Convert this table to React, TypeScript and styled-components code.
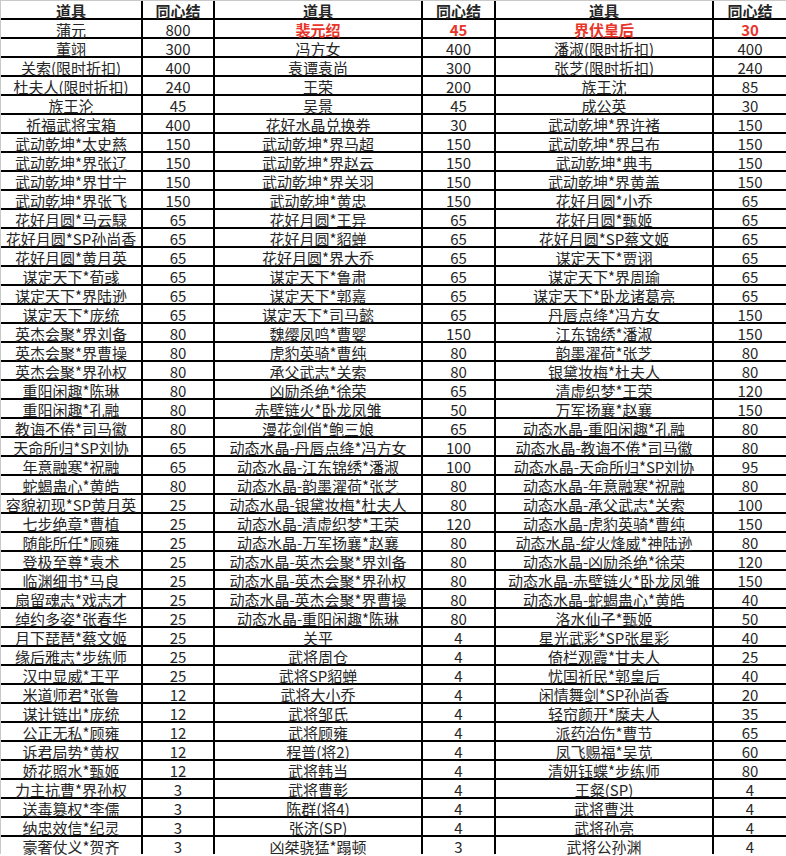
import React from "react";
import styled, { createGlobalStyle } from "styled-components";

type Item = [string, number];

// 三组道具 / 同心结
const groupA: Item[] = [
  ["蒲元", 800],
  ["董翊", 300],
  ["关索(限时折扣)", 400],
  ["杜夫人(限时折扣)", 240],
  ["族王沦", 45],
  ["祈福武将宝箱", 400],
  ["武动乾坤*太史慈", 150],
  ["武动乾坤*界张辽", 150],
  ["武动乾坤*界甘宁", 150],
  ["武动乾坤*界张飞", 150],
  ["花好月圆*马云騄", 65],
  ["花好月圆*SP孙尚香", 65],
  ["花好月圆*黄月英", 65],
  ["谋定天下*荀彧", 65],
  ["谋定天下*界陆逊", 65],
  ["谋定天下*庞统", 65],
  ["英杰会聚*界刘备", 80],
  ["英杰会聚*界曹操", 80],
  ["英杰会聚*界孙权", 80],
  ["重阳闲趣*陈琳", 80],
  ["重阳闲趣*孔融", 80],
  ["教诲不倦*司马徽", 80],
  ["天命所归*SP刘协", 65],
  ["年意融寒*祝融", 65],
  ["蛇蝎蛊心*黄皓", 80],
  ["容貌初现*SP黄月英", 25],
  ["七步绝章*曹植", 25],
  ["随能所任*顾雍", 25],
  ["登极至尊*袁术", 25],
  ["临渊细书*马良", 25],
  ["扇留魂志*戏志才", 25],
  ["绰约多姿*张春华", 25],
  ["月下琵琶*蔡文姬", 25],
  ["缘后雅志*步练师", 25],
  ["汉中显威*王平", 25],
  ["米道师君*张鲁", 12],
  ["谋计链出*庞统", 12],
  ["公正无私*顾雍", 12],
  ["诉君局势*黄权", 12],
  ["娇花照水*甄姬", 12],
  ["力主抗曹*界孙权", 3],
  ["送毒篡权*李儒", 3],
  ["纳忠效信*纪灵", 3],
  ["豪奢仗义*贺齐", 3],
];

const groupB: Item[] = [
  ["裴元绍", 45],
  ["冯方女", 400],
  ["袁谭袁尚", 300],
  ["王荣", 200],
  ["吴景", 45],
  ["花好水晶兑换券", 30],
  ["武动乾坤*界马超", 150],
  ["武动乾坤*界赵云", 150],
  ["武动乾坤*界关羽", 150],
  ["武动乾坤*黄忠", 150],
  ["花好月圆*王异", 65],
  ["花好月圆*貂蝉", 65],
  ["花好月圆*界大乔", 65],
  ["谋定天下*鲁肃", 65],
  ["谋定天下*郭嘉", 65],
  ["谋定天下*司马懿", 65],
  ["魏缨凤鸣*曹婴", 150],
  ["虎豹英骑*曹纯", 80],
  ["承父武志*关索", 80],
  ["凶励杀绝*徐荣", 65],
  ["赤壁链火*卧龙凤雏", 50],
  ["漫花剑俏*鲍三娘", 65],
  ["动态水晶-丹唇点绛*冯方女", 100],
  ["动态水晶-江东锦绣*潘淑", 100],
  ["动态水晶-韵墨濯荷*张芝", 80],
  ["动态水晶-银黛妆梅*杜夫人", 80],
  ["动态水晶-清虚织梦*王荣", 120],
  ["动态水晶-万军扬襄*赵襄", 80],
  ["动态水晶-英杰会聚*界刘备", 80],
  ["动态水晶-英杰会聚*界孙权", 80],
  ["动态水晶-英杰会聚*界曹操", 80],
  ["动态水晶-重阳闲趣*陈琳", 80],
  ["关平", 4],
  ["武将周仓", 4],
  ["武将SP貂蝉", 4],
  ["武将大小乔", 4],
  ["武将邹氏", 4],
  ["武将顾雍", 4],
  ["程普(将2)", 4],
  ["武将韩当", 4],
  ["武将曹彰", 4],
  ["陈群(将4)", 4],
  ["张济(SP)", 4],
  ["凶桀骁猛*蹋顿", 3],
];

const groupC: Item[] = [
  ["界伏皇后", 30],
  ["潘淑(限时折扣)", 400],
  ["张芝(限时折扣)", 240],
  ["族王沈", 85],
  ["成公英", 30],
  ["武动乾坤*界许褚", 150],
  ["武动乾坤*界吕布", 150],
  ["武动乾坤*典韦", 150],
  ["武动乾坤*界黄盖", 150],
  ["花好月圆*小乔", 65],
  ["花好月圆*甄姬", 65],
  ["花好月圆*SP蔡文姬", 65],
  ["谋定天下*贾诩", 65],
  ["谋定天下*界周瑜", 65],
  ["谋定天下*卧龙诸葛亮", 65],
  ["丹唇点绛*冯方女", 150],
  ["江东锦绣*潘淑", 150],
  ["韵墨濯荷*张芝", 80],
  ["银黛妆梅*杜夫人", 80],
  ["清虚织梦*王荣", 120],
  ["万军扬襄*赵襄", 150],
  ["动态水晶-重阳闲趣*孔融", 80],
  ["动态水晶-教诲不倦*司马徽", 80],
  ["动态水晶-天命所归*SP刘协", 95],
  ["动态水晶-年意融寒*祝融", 80],
  ["动态水晶-承父武志*关索", 100],
  ["动态水晶-虎豹英骑*曹纯", 150],
  ["动态水晶-绽火烽威*神陆逊", 80],
  ["动态水晶-凶励杀绝*徐荣", 120],
  ["动态水晶-赤壁链火*卧龙凤雏", 150],
  ["动态水晶-蛇蝎蛊心*黄皓", 40],
  ["洛水仙子*甄姬", 50],
  ["星光武彩*SP张星彩", 40],
  ["倚栏观霞*甘夫人", 25],
  ["忧国祈民*郭皇后", 40],
  ["闲情舞剑*SP孙尚香", 20],
  ["轻帘颜开*糜夫人", 35],
  ["派药治伤*曹节", 65],
  ["凤飞赐福*吴苋", 60],
  ["清妍钰蝶*步练师", 80],
  ["王粲(SP)", 4],
  ["武将曹洪", 4],
  ["武将孙亮", 4],
  ["武将公孙渊", 4],
];

// 第一行（裴元绍 / 界伏皇后）为红色加粗
const redRows: Record<string, boolean> = { 裴元绍: true, 界伏皇后: true };

const App: React.FC = () => {
  const headers = ["道具", "同心结", "道具", "同心结", "道具", "同心结"];

  return (
    <>
      <GlobalStyle />
      <Page>
        <Sheet>
          {headers.map((h, i) => (
            <HeadCell key={`h${i}`}>{h}</HeadCell>
          ))}
          {groupA.map((row, i) =>
            [row, groupB[i], groupC[i]].map(([name, count], g) => {
              const red = !!redRows[name];
              return (
                <React.Fragment key={`${i}-${g}`}>
                  <Cell $red={red}>{name}</Cell>
                  <Cell $red={red}>{count}</Cell>
                </React.Fragment>
              );
            })
          )}
        </Sheet>
      </Page>
    </>
  );
};

export default App;

/** Styled Components */
const GlobalStyle = createGlobalStyle`
  html, body {
    margin: 0;
    padding: 0;
    background: #ffffff;
  }
  body {
    font-family: "Noto Sans CJK SC", "Noto Sans", sans-serif;
  }
`;

const Page = styled.div`
  width: 786px;
  height: 856px;
  overflow: hidden;
  background: #ffffff;
`;

const Sheet = styled.div`
  display: grid;
  grid-template-columns: 140px 70px 206px 71px 216px 72px;
  grid-auto-rows: 17px;
  gap: 2px;
  width: 786px;
  box-sizing: border-box;
  background: #000000;
  border-top: 1px solid #c9c9c9;
  border-left: 1px solid #c9c9c9;
`;

const Cell = styled.div<{ $red?: boolean }>`
  display: flex;
  align-items: center;
  justify-content: center;
  padding-top: 1px;
  box-sizing: border-box;
  background: #ffffff;
  white-space: nowrap;
  font-family: "Noto Sans CJK SC", sans-serif;
  font-size: 15px;
  line-height: 15px;
  font-weight: ${(p) => (p.$red ? 700 : 400)};
  color: ${(p) => (p.$red ? "#e8352a" : "#262626")};
`;

const HeadCell = styled(Cell)`
  padding-top: 1px;
  font-weight: 700;
  color: #262626;
`;
